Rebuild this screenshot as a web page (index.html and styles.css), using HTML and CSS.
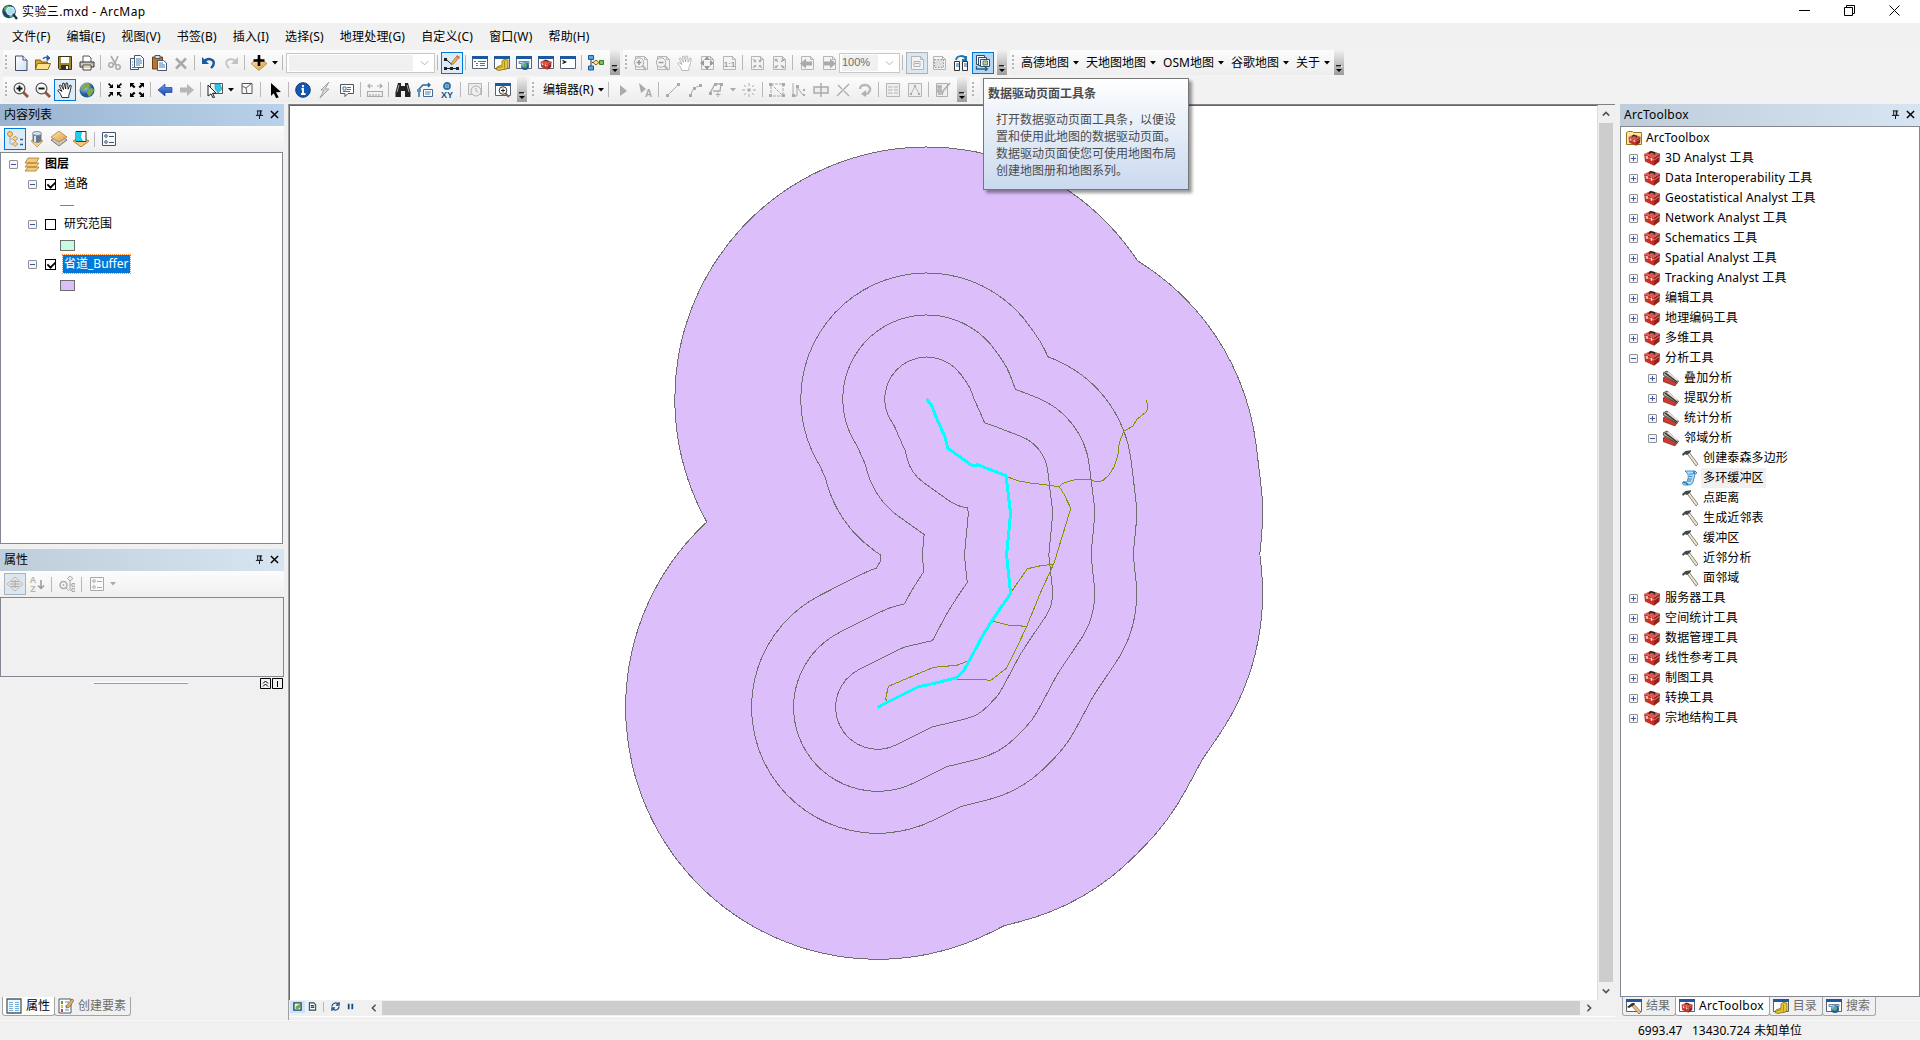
FILE: index.html
```html
<!DOCTYPE html>
<html lang="zh-CN">
<head>
<meta charset="utf-8">
<title>实验三.mxd - ArcMap</title>
<link rel="stylesheet" href="styles.css">
</head>
<body>
<svg class="sprite" aria-hidden="true">
<defs>
<linearGradient id="gGold" x2="1" y2="1"><stop stop-color="#ffe6ae"/><stop offset="1" stop-color="#d99c3c"/></linearGradient>
<linearGradient id="gBlue" x2="0" y2="1"><stop stop-color="#6b9be8"/><stop offset="1" stop-color="#1543a8"/></linearGradient>
<linearGradient id="gPage" x2="1" y2="1"><stop stop-color="#fff"/><stop offset="1" stop-color="#cfe0f2"/></linearGradient>
<radialGradient id="gGlobe" cx=".35" cy=".3"><stop stop-color="#bde0ff"/><stop offset="1" stop-color="#1c5aa0"/></radialGradient>
<symbol id="app" viewBox="0 0 16 16"><circle cx="7" cy="7.5" r="6.8" fill="#174c6b"/><path d="M2 4l4-3 2 3-2 3-3 1zM9 10l3 1-3 3-2-2z" fill="#63b45c"/><circle cx="8.5" cy="7" r="4" fill="#a7ddf5" stroke="#e8f4fa"/><path d="M11 10l4 5" stroke="#163a4d" stroke-width="2.4"/></symbol>
<symbol id="new" viewBox="0 0 16 16"><path d="M2.500 1h7.500l4 4v10.500H2.500z" fill="url(#gPage)" stroke="#3d4f66"/><path d="M10 1v4h4" fill="#fff" stroke="#3d4f66"/></symbol>
<symbol id="open" viewBox="0 0 16 16"><path d="M.5 14.500V5h5l1 2h6v7.500z" fill="#d9a534" stroke="#7a5b16"/><path d="M2.500 8.500H15.500L13 14.500H.5z" fill="#ffe18a" stroke="#8d6b20"/><path d="M8 4c1-2 3-2 5-1" fill="none" stroke="#2461a4" stroke-width="1.400"/><path d="M12 .5l3 2.500-3 2.500z" fill="#2461a4" stroke="#2461a4"/></symbol>
<symbol id="save" viewBox="0 0 16 16"><path d="M1.500 1.500h13v13h-12l-1-1z" fill="#a38a24" stroke="#3b3519"/><path d="M4 2h8v6H4z" fill="#fff"/><path d="M4 10h8v5H4z" fill="#303030"/><path d="M9 11h2v3H9z" fill="#fff"/></symbol>
<symbol id="print" viewBox="0 0 16 16"><path d="M4 7V1h6l2 2v4" fill="#fff" stroke="#555"/><path d="M1 7h14v5H1z" fill="#c9c9c9" stroke="#333"/><path d="M4 10h8v5H4z" fill="#fff" stroke="#444"/><path d="M5 12h6M12 8.500h2" stroke="#d2ad21"/></symbol>
<symbol id="cut" viewBox="0 0 16 16"><path d="M4 1l5 9M11 1L7 10" stroke="#aaa" stroke-width="1.600"/><circle cx="4" cy="10" r="2.200" fill="none" stroke="#aaa" stroke-width="1.500"/><circle cx="11" cy="12" r="2.200" fill="none" stroke="#aaa" stroke-width="1.500"/></symbol>
<symbol id="copy" viewBox="0 0 16 16"><path d="M1.500 3.500h8v11h-8z" fill="#fff" stroke="#42566d"/><path d="M5.500.5h6l3 3v9h-9z" fill="#fff" stroke="#42566d"/><path d="M7 4h5M7 6h6M7 8h6M7 10h4M3 7h1M3 10h1M3 12.500h5" stroke="#3f7db8"/></symbol>
<symbol id="paste" viewBox="0 0 16 16"><path d="M1.500 2h10v12h-10z" fill="#b9742d" stroke="#6d431c"/><path d="M4 .5h5v3H4z" fill="#ddd" stroke="#555"/><path d="M6.500 5.500h6l3 2.500v7.500h-9z" fill="#fff" stroke="#42566d"/><path d="M8 8h4M8 10h6M8 12h6" stroke="#3f7db8"/></symbol>
<symbol id="del" viewBox="0 0 16 16"><path d="M3 3.500l10 10M13 3.500l-10 10" stroke="#aaa" stroke-width="2.600"/></symbol>
<symbol id="undo" viewBox="0 0 16 16"><path d="M3.500 6C8 2 14 5 12.500 9.500Q12 11 10 13" fill="none" stroke="#1c5a9b" stroke-width="2.400"/><path d="M1 2v7h7z" fill="#1c5a9b"/></symbol>
<symbol id="redo" viewBox="0 0 16 16"><path d="M12.500 6C8 2 2 5 3.500 9.500Q4 11 6 13" fill="none" stroke="#c1c1c1" stroke-width="1.800"/><path d="M15 2v7H8z" fill="#c1c1c1"/></symbol>
<symbol id="add" viewBox="0 0 16 16"><path d="M0 8.500L8 3l8 5.500-8 7z" fill="url(#gGold)" stroke="#b58338" stroke-width=".8"/><path d="M8 0v11M2.500 5.500h11" stroke="#000" stroke-width="2.600"/></symbol>
<symbol id="edit" viewBox="0 0 16 16"><path d="M1.500 4L8 9.500M2 13.500h12" stroke="#222"/><path d="M0 3h3v3H0zM0 12h3v3H0zM6 12h3v3H6zM12 12h3v3h-3z" fill="#222"/><path d="M7 10l1-3 5-6 2 1.500-5 6z" fill="#f2b04e" stroke="#95662a" stroke-width=".7"/><path d="M13 0l3 2-1 2-3-2z" fill="#d46f5c"/></symbol>
<symbol id="win" viewBox="0 0 16 16"><path d="M.5 1.500h15v12H.5z" fill="#fff" stroke="#566375"/><path d="M0 1h16v3H0z" fill="#1d58a1"/></symbol>
<symbol id="toc" viewBox="0 0 16 16"><use href="#win"/><path d="M2 6.500h2M6 6.500h8M4 8.500h2M8 8.500h5M4 10.500h2M8 10.500h5" stroke="#3276bd"/></symbol>
<symbol id="catalog" viewBox="0 0 16 16"><use href="#win"/><path d="M8 6l2-1.500 4 .5v8l-3 1.500H9l-4 1-3-1 1-2.500 5-2z" fill="#e6c633" stroke="#7e690f" stroke-width=".8"/><path d="M10.500 6v7.500M3 13l6-1.500" stroke="#9d8418" stroke-width=".8" fill="none"/></symbol>
<symbol id="search" viewBox="0 0 16 16"><use href="#win"/><path d="M3 6.500h10v2H3z" fill="#dceaf6" stroke="#6b86a3"/><circle cx="9" cy="11" r="4" fill="url(#gGlobe)"/><path d="M7 10l2-2 2 2-1 3-2-1z" fill="#5fae52"/></symbol>
<symbol id="boxart" viewBox="0 0 16 16"><path d="M0 4L7 .8l9 2.700-6 4z" fill="#dd5449"/><path d="M0 4l10 3.500V15.800L1 11.500z" fill="#c93027"/><path d="M10 7.500l6-4-.5 8L10 15.800z" fill="#96201a"/><path d="M.3 6.500l9.700 3.500 5.700-3.800" fill="none" stroke="#f0a198" stroke-width=".7"/><path d="M5 3.700l1.500-1.900 4 1.100v1.600" fill="none" stroke="#222" stroke-width="1.400"/><path d="M3 6v3M7.500 7.700v3" stroke="#f2eded" stroke-width="1.300"/></symbol>
<symbol id="tbwin" viewBox="0 0 16 16"><use href="#win"/><use href="#boxart" x="2" y="4" width="12" height="11"/></symbol>
<symbol id="python" viewBox="0 0 16 16"><use href="#win"/><path d="M2.500 5.500l3 1.500-3 1.500" fill="none" stroke="#000" stroke-width="1.300"/></symbol>
<symbol id="model" viewBox="0 0 16 16"><path d="M3 3v10M4 7.500h9" stroke="#333"/><path d="M.5.500h5v4h-5zM.5 11h5v4h-5z" fill="#52a6e4" stroke="#165a9b"/><path d="M8 5l3 2.500L8 10 5 7.500z" fill="#ffe37a" stroke="#7b651d"/><path d="M11.500 5.500h4v4h-4z" fill="#79c34e" stroke="#367d24"/></symbol>
<symbol id="zin" viewBox="0 0 16 16"><path d="M10 10l5 5" stroke="#9b5146" stroke-width="2.800"/><circle cx="6.500" cy="6.500" r="5.400" fill="#f8f8f8" stroke="#555" stroke-width="1.200"/><path d="M3.500 6.500h6M6.500 3.500v6" stroke="#111" stroke-width="1.900"/></symbol>
<symbol id="zout" viewBox="0 0 16 16"><path d="M10 10l5 5" stroke="#9b5146" stroke-width="2.800"/><circle cx="6.500" cy="6.500" r="5.400" fill="#f8f8f8" stroke="#555" stroke-width="1.200"/><path d="M3.500 6.500h6" stroke="#111" stroke-width="1.900"/></symbol>
<symbol id="pan" viewBox="0 0 16 16"><path d="M5 15.500L3.500 12 .7 8.500 2 7.500l3 2L2.300 3.500 3.800 3l2.700 4.500L5.500 1.500 7 1l1.700 6L9 1l1.600.2.500 6L13 3l1.300.7L13 10l-1.200 3v2.500z" fill="#fff" stroke="currentColor" stroke-width=".8" stroke-linejoin="round"/></symbol>
<symbol id="globe" viewBox="0 0 16 16"><circle cx="8" cy="8" r="7.500" fill="url(#gGlobe)"/><path d="M4 3l4-2 3 1-1 3-3 1-3 3-2-2zM9 7l4-1 2 2-2 4-3 3-2-4z" fill="#84a943"/></symbol>
<symbol id="shrink" viewBox="0 0 16 16"><g fill="currentColor"><path d="M6 6H2l1.400-1.400L1 2.200 2.200 1l2.400 2.400L6 2zM10 6h4l-1.400-1.400L15 2.200 13.800 1l-2.400 2.400L10 2zM6 10H2l1.400 1.400L1 13.800 2.200 15l2.400-2.400L6 14zM10 10h4l-1.400 1.400 2.400 2.400-1.200 1.200-2.400-2.400L10 14z"/></g></symbol>
<symbol id="expand" viewBox="0 0 16 16"><g fill="currentColor"><path d="M1 1h4.500L4 2.500l2.500 2.300L5 6.300 2.500 4 1 5.500zM15 1h-4.500L12 2.500 9.500 4.800 11 6.300 13.500 4 15 5.500zM1 15h4.500L4 13.500l2.500-2.300L5 9.700 2.500 12 1 10.500zM15 15h-4.500l1.500-1.500-2.500-2.300L11 9.700l2.500 2.300 1.500-1.500z"/></g></symbol>
<symbol id="back" viewBox="0 0 16 16"><path d="M1 8l7-6v3.500h7v5H8V14z" fill="url(#gBlue)" stroke="#1b46a0" stroke-width=".7"/></symbol>
<symbol id="fwd" viewBox="0 0 16 16"><path d="M15 8L8 2v3.500H1v5h7V14z" fill="#b7b7b7"/></symbol>
<symbol id="select" viewBox="0 0 16 16"><path d="M3.500 1.500h12v10h-12z" fill="#eaf4fa" stroke="#555"/><path d="M8 2h5l2 5-4 4-3-4z" fill="#20cbea" stroke="#59808d" stroke-width=".6"/><path d="M1 3l8 8-3.500.3 2 4-1.500.6-2-4L1 14z" fill="#fff" stroke="#222"/></symbol>
<symbol id="clear" viewBox="0 0 16 16"><path d="M3 1.500h10v10H3z" fill="#f8f8f8" stroke="#555"/><path d="M3 4l4 2 1 5.500M7 6l5-4" stroke="#666" fill="none"/></symbol>
<symbol id="ptr" viewBox="0 0 16 16"><path d="M4 1l10 9-5 .3 2.700 5-2.500 1-2.500-5L4 14z" fill="currentColor"/></symbol>
<symbol id="info" viewBox="0 0 16 16"><circle cx="8" cy="8" r="7.300" fill="#1558af" stroke="#113a79"/><path d="M8 3v2.200M6.500 7H8v5M6 12h4.500" stroke="#fff" stroke-width="1.900" fill="none"/></symbol>
<symbol id="bolt" viewBox="0 0 16 16"><path d="M12 0L4 8h3l-4 8 9-9H8z" fill="#ddd" stroke="#999" stroke-width=".9"/></symbol>
<symbol id="popup" viewBox="0 0 16 16"><path d="M1.500 2.500h13v9H9l-3 3v-3H1.500z" fill="#fff" stroke="#555"/><path d="M4 5h3v3H4zM8 5.500h4M8 7.500h4M4 9.500h7" stroke="#397bb4" fill="none"/></symbol>
<symbol id="measure" viewBox="0 0 16 16"><path d="M1 4h5M10 4h5M3 2L1 4l2 2M13 2l2 2-2 2M.5 9.500h15v5H.5zM3 12v2M6 12v2M9 12v2M12 12v2" stroke="#aaa" stroke-width="1.200" fill="none"/></symbol>
<symbol id="binoc" viewBox="0 0 16 16"><path d="M3 1h3v3h4V1h3l2.500 9v5H10V9H6v6H.5v-5z" fill="#222"/><path d="M4 3L2 10M12 3l2 7" stroke="#aaa"/></symbol>
<symbol id="route" viewBox="0 0 16 16"><path d="M2 15V7l4-4h7M11 1l2 2-2 2" fill="none" stroke="#2465a2" stroke-width="1.400"/><path d="M6.500 7.500h9v7h-9z" fill="#fff" stroke="#49698b"/><path d="M8 10h6M8 12h5" stroke="#3d82bb"/><path d="M0 7h4v3H0z" fill="#5296cd"/></symbol>
<symbol id="xy" viewBox="0 0 16 16"><circle cx="8" cy="4" r="3" fill="#fff" stroke="#2871a8" stroke-width="1.800"/><path d="M8 2v4M6 4h4" stroke="#2871a8"/><text x="8" y="16" text-anchor="middle" font-size="9" font-weight="bold" fill="#174f83">XY</text></symbol>
<symbol id="clock" viewBox="0 0 16 16"><path d="M1.500 1.500h13v11h-13z" fill="#ececec" stroke="#b5b5b5"/><circle cx="9" cy="9" r="5" fill="#eee" stroke="#b0b0b0"/><path d="M9 6v3l2 1" fill="none" stroke="#b0b0b0"/></symbol>
<symbol id="viewer" viewBox="0 0 16 16"><use href="#win"/><path d="M10 11l4 4" stroke="#985d45" stroke-width="2"/><circle cx="8" cy="8.500" r="3.800" fill="#fff" stroke="#333"/><path d="M6 8.500h4M8 6.500v4" stroke="#222"/></symbol>
<symbol id="pg" viewBox="0 0 16 16"><path d="M2.500 1.500h9l3 3v10h-12z" fill="#f3f3f3" stroke="#b5b5b5"/><path d="M11.500 1.500v3h3" fill="none" stroke="#b5b5b5"/></symbol>
<symbol id="pzin" viewBox="0 0 16 16"><use href="#pg"/><path d="M9 10l4 5" stroke="#b8b8b8" stroke-width="2.200"/><circle cx="6" cy="7.500" r="4.700" fill="#f4f4f4" stroke="#aaa"/><path d="M3.500 7.500h5M6 5v5" stroke="#999" stroke-width="1.500"/></symbol>
<symbol id="pzout" viewBox="0 0 16 16"><use href="#pg"/><path d="M9 10l4 5" stroke="#b8b8b8" stroke-width="2.200"/><circle cx="6" cy="7.500" r="4.700" fill="#f4f4f4" stroke="#aaa"/><path d="M3.500 7.500h5" stroke="#999" stroke-width="1.500"/></symbol>
<symbol id="pfull" viewBox="0 0 16 16"><use href="#pg"/><path d="M8 1l3 4H5zM8 15l3-4H5zM1 8l4-3v6zM15 8l-4-3v6z" fill="#999"/></symbol>
<symbol id="pone" viewBox="0 0 16 16"><use href="#pg"/><text x="8.500" y="12" text-anchor="middle" font-size="8" font-weight="bold" fill="#999">1:1</text></symbol>
<symbol id="pshrink" viewBox="0 0 16 16"><use href="#pg"/><use href="#shrink" x="3" y="3" width="11" height="11"/></symbol>
<symbol id="pexpand" viewBox="0 0 16 16"><use href="#pg"/><use href="#expand" x="3" y="3" width="11" height="11"/></symbol>
<symbol id="pback" viewBox="0 0 16 16"><use href="#pg"/><path d="M1 8.500l6-5v3h6v4H7v3z" fill="#aaa"/></symbol>
<symbol id="pfwd" viewBox="0 0 16 16"><use href="#pg"/><path d="M15 8.500l-6-5v3H3v4h6v3z" fill="#aaa"/></symbol>
<symbol id="pdraft" viewBox="0 0 16 16"><use href="#pg"/><path d="M5 6.500h6v5H5z" fill="none" stroke="#b1b1b1"/><path d="M6 8.500h4" stroke="#aaa"/></symbol>
<symbol id="pfocus" viewBox="0 0 16 16"><use href="#pg"/><path d="M3.500 4.500h9v8h-9z" fill="#ddd" stroke="#999" stroke-dasharray="1.500 1.500"/></symbol>
<symbol id="change" viewBox="0 0 16 16"><path d="M3 5c1-5 8-5 10-1M13 1v4H9" fill="none" stroke="#2374aa" stroke-width="2"/><path d="M1.500 6.500h5v9h-5zM9.500 6.500h5v9h-5z" fill="#fff" stroke="#333"/><path d="M3 9h3M3 11h3M11 9h3M11 11h3" stroke="#2a6292"/></symbol>
<symbol id="ddp" viewBox="0 0 16 16"><path d="M1.500.5h8v9h-8z" fill="#fff" stroke="#344a62"/><path d="M3.500 2.500h8v8h-8z" fill="#eef5fb" stroke="#344a62"/><path d="M5.500 4.500h9v7h-9z" fill="#fff" stroke="#344a62"/><path d="M8 6h4.500v4H8z" fill="#b5d37f" stroke="#246382" stroke-width=".8"/><path d="M1.500 11v3h10M10 12l2.500 2-2.500 2" fill="none" stroke="#246382" stroke-width="1.300"/></symbol>
<symbol id="ptrs" viewBox="0 0 16 16"><path d="M5 3l7 6-7 5z" fill="#aaa"/></symbol>
<symbol id="ptra" viewBox="0 0 16 16"><path d="M2 1l7 6-5 4z" fill="#aaa"/><text x="11.500" y="15" text-anchor="middle" font-size="10" font-weight="bold" fill="#aaa">A</text></symbol>
<symbol id="line" viewBox="0 0 16 16"><path d="M3 13L13 3" stroke="#aaa"/><path d="M1 12h3v3H1zM12 1h3v3h-3z" fill="#aaa"/></symbol>
<symbol id="arc" viewBox="0 0 16 16"><path d="M4 13Q5 5 13 4" fill="none" stroke="#aaa"/><path d="M2 12h3v3H2zM6 5h3v3H6zM12 2h3v3h-3z" fill="#aaa"/></symbol>
<symbol id="trace" viewBox="0 0 16 16"><path d="M1 11L6 2h6l-1 7H4" fill="none" stroke="#aaa" stroke-width="1.300"/><path d="M0 10h3v3H0zM5 1h3v3H5zM11 1h3v3h-3z" fill="#aaa"/><path d="M9 10v5M6.500 12.500h5" stroke="#aaa"/></symbol>
<symbol id="point" viewBox="0 0 16 16"><path d="M8 1v3M8 12v3M1 8h3M12 8h3M3 3l2 2M11 11l2 2M13 3l-2 2M5 11l-2 2" stroke="#aaa"/><path d="M6.500 6.500h3v3h-3z" fill="#aaa"/></symbol>
<symbol id="verts" viewBox="0 0 16 16"><path d="M2 2L14 14H2zM2 2h12v12" fill="none" stroke="#aaa" stroke-dasharray="3 1"/><path d="M0 1h3v3H0zM0 12h3v3H0zM13 1h3v3h-3zM13 12h3v3h-3z" fill="#aaa"/></symbol>
<symbol id="resh" viewBox="0 0 16 16"><path d="M2 1v13h4V5l6 8" fill="none" stroke="#aaa"/><path d="M1 12h3v3H1zM5 3h3v3H5zM12 7h2v2h-2zM12 12h2v2h-2z" fill="#aaa"/></symbol>
<symbol id="cutp" viewBox="0 0 16 16"><path d="M1 5h14v6H1zM8 1v14" fill="#eee" stroke="#aaa" stroke-width="1.500"/></symbol>
<symbol id="split" viewBox="0 0 16 16"><path d="M2 14L14 2M3 3l4 4M9 9l5 5" stroke="#aaa" stroke-width="1.300"/></symbol>
<symbol id="rot" viewBox="0 0 16 16"><path d="M3 7C3 1 14 2 13 8q-1 4-5 4" fill="none" stroke="#b8b8b8" stroke-width="2.400"/><path d="M9 8v7l-5-3z" fill="#b0b0b0"/></symbol>
<symbol id="attr" viewBox="0 0 16 16"><path d="M1.500 1.500h13v13h-13zM3 5h4.500M3 8h4.500M3 11h4.500M9 5h4M9 8h4M9 11h4" fill="#eee" stroke="#b5b5b5"/></symbol>
<symbol id="sketch" viewBox="0 0 16 16"><path d="M1.500 1.500h13v13h-13zM4 12l4-8 4 8" fill="#eee" stroke="#b5b5b5"/><path d="M3 11h2v2H3zM7 3h2v2H7zM11 11h2v2h-2z" fill="#aaa"/></symbol>
<symbol id="creatg" viewBox="0 0 16 16"><path d="M1.500 1.500h11v13h-11z" fill="#eee" stroke="#b0b0b0"/><path d="M3 4h3v2H3zM3 8h3v2H3zM3 12h3M7 13l1-4 7-8" stroke="#aaa" fill="none" stroke-width="1.500"/></symbol>
<symbol id="order" viewBox="0 0 16 16"><path d="M3 4v9h5M3 8h5" stroke="#9baec0" fill="none"/><circle cx="3" cy="3" r="2.500" fill="#f6d28d" stroke="#c48c36"/><path d="M8 5l3 2.500L8 10 5.500 7.500zM8 10.500l3 2.500-3 2.500L5.500 13z" fill="#f6d28d" stroke="#c48c36" stroke-width=".8"/><path d="M13 8.500h3M13 13.500h3" stroke="#24649a" stroke-width="1.500"/></symbol>
<symbol id="source" viewBox="0 0 16 16"><path d="M2 10l6-3 6 3-6 6z" fill="#f5d18d" stroke="#bd873d" stroke-width=".7"/><path d="M3.500 2.500v8q4.500 2.500 9 0v-8z" fill="#68798e"/><ellipse cx="8" cy="2.500" rx="4.500" ry="2" fill="#d9e2eb" stroke="#77889a"/><path d="M6 5v6" stroke="#dce5ed" stroke-width="2"/></symbol>
<symbol id="visible" viewBox="0 0 16 16"><path d="M0 9l8-5 8 5-8 6z" fill="#c7c7c7" stroke="#777"/><path d="M0 6l8-6 8 6-8 5z" fill="url(#gGold)" stroke="#b58338" stroke-width=".8"/></symbol>
<symbol id="selc" viewBox="0 0 16 16"><path d="M0 10l8-4 8 4-8 6z" fill="#f3c775" stroke="#b58338"/><path d="M3 .5h10v10H3z" fill="#fff" stroke="#333"/><path d="M3 1h6l-1 5 2 4H3z" fill="#20cbea"/></symbol>
<symbol id="opts" viewBox="0 0 16 16"><path d="M1.500 1.500h13v13h-13z" fill="#f7f9fb" stroke="currentColor"/><circle cx="5" cy="5" r="1.300" fill="none" stroke="currentColor"/><circle cx="5" cy="11" r="1.300" fill="none" stroke="currentColor"/><path d="M8 5.500h5M8 11.500h5" stroke="currentColor"/></symbol>
<symbol id="stack" viewBox="0 0 16 16"><g fill="#f4ca7b" stroke="#a87932" stroke-width=".8"><path d="M1 15l3-4h11l-3 4zM1 11l3-4h11l-3 4zM1 7l3-5h11l-3 5z"/></g></symbol>
<symbol id="diamond" viewBox="0 0 16 16"><path d="M0 8l8-7 8 7-8 7z" fill="#e3e3e3" stroke="#bbb"/><path d="M4 5.500h8M3 8h10M4 10.500h8M8 4v8" stroke="#aaa"/></symbol>
<symbol id="az" viewBox="0 0 16 16"><text x="4" y="7" text-anchor="middle" font-size="9" font-weight="bold" fill="#b5b5b5">A</text><text x="4" y="16" text-anchor="middle" font-size="9" font-weight="bold" fill="#b5b5b5">Z</text><path d="M12 4v9M9 9.500l3 3 3-3" stroke="#999" stroke-width="1.500" fill="none"/></symbol>
<symbol id="find" viewBox="0 0 16 16"><circle cx="4.500" cy="9" r="3.500" fill="none" stroke="#aaa" stroke-width="1.500"/><circle cx="4.500" cy="9" r="1" fill="#aaa"/><path d="M7 12l3 3M11 0l3 2.500L11 5 8.500 2.500zM11 5v9h2M11 9h2M13 7.500h3v3h-3zM13 12.500h3v3h-3z" fill="#eee" stroke="#aaa"/></symbol>
<symbol id="tbroot" viewBox="0 0 16 16"><path d="M.5 14.500v-12l2-1h4l1 1h8v12z" fill="#ffe69a" stroke="#8f7a22"/><use href="#boxart" x="2" y="4" width="13" height="12"/></symbol>
<symbol id="kit" viewBox="0 0 16 16"><path d="M0 8l2-1 12 6-2 3L0 11.500z" fill="#d0392d" stroke="#6d1d17" stroke-width=".6"/><path d="M0 3l4-2 11.500 10-1.500 2.500L4 7 1 6z" fill="#b4b1a6" stroke="#34322e" stroke-width=".8"/><path d="M2 3l12 9" stroke="#333" stroke-width="1.500"/><path d="M5 2.500l9.500 8" stroke="#f1ebdf" stroke-width="1.300"/></symbol>
<symbol id="hammer" viewBox="0 0 16 16"><path d="M5 3.500l2.500-.8L16 14l-2 2z" fill="#eee5ce" stroke="#70685a" stroke-width=".8"/><path d="M0 4l3.500-3L9 .3v1.500L7.500 3 5 5 3 4.300 1 6z" fill="#44484b"/></symbol>
<symbol id="script" viewBox="0 0 16 16"><path d="M3 1h10l2 2-2 1-2 8q-1 3-4 3H2q-3-1-1-3h4q2-5 1-8z" fill="#b8dcf6" stroke="#3683bf" stroke-width=".9"/><path d="M7 4h4M7 6.500h3M6 9h4M6 11h3" stroke="#3687c9"/><path d="M1 12q4 1 5 3M12 1v3" stroke="#267bbf" stroke-width="1.600" fill="none"/></symbol>
<symbol id="results" viewBox="0 0 16 16"><use href="#win"/><path d="M5 7l3-1 7 8-2 2z" fill="#eabf8c" stroke="#7d5936" stroke-width=".7"/><path d="M1 9l5-4 3 0-1 2-5 3z" fill="#333"/></symbol>
<symbol id="table" viewBox="0 0 16 16"><path d="M1 1h14v14H1z" fill="#f2f8fc" stroke="#4d5963" stroke-width="1.300"/><path d="M3 4.500h4M9 4.500h4M3 6.500h4M9 6.500h4M3 8.500h4M9 8.500h4M3 10.500h4M9 10.500h4M3 12.500h4M9 12.500h4" stroke="#78aeda"/></symbol>
<symbol id="creat" viewBox="0 0 16 16"><path d="M1 1h12v14H1z" fill="#fff" stroke="#4d5963"/><path d="M3 3h2v3H3z" fill="#579a4c"/><path d="M3 7h2v3H3z" fill="#e5b63c"/><path d="M3 11h2v3H3z" fill="#bc503d"/><path d="M7 4h4M7 8h3M7 12h4" stroke="#458fc1"/><path d="M8 10l1-3 5-6 2 1.500-5 7z" fill="#e4b36b" stroke="#87512b" stroke-width=".7"/></symbol>
<symbol id="pin" viewBox="0 0 10 10"><path d="M2 1h6M3 1v5M6.500 1v5M5.800 1v5M1 6h8M5 6v4" stroke="#000" fill="none"/></symbol>
<symbol id="x" viewBox="0 0 10 10"><path d="M1 1l8 8M9 1L1 9" stroke="#000" stroke-width="1.600"/></symbol>
<symbol id="of" viewBox="0 0 8 8"><path d="M1.500 1.500h6" stroke="#fff"/><path d="M1 .8h5" stroke="#000" stroke-width="1.300"/><path d="M1 4h6L4 7z" fill="#000"/></symbol>
<symbol id="dd" viewBox="0 0 6 4"><path d="M0 0h6L3 3.500z" fill="currentColor"/></symbol>
<symbol id="chev" viewBox="0 0 10 6"><path d="M1 1l4 4 4-4" fill="none" stroke="currentColor" stroke-width="var(--w,1)"/></symbol>
</defs>
</svg>

<div class="app">
<header class="titlebar">
<svg class="i"><use href="#app"/></svg><span class="title">实验三.mxd - ArcMap</span>
<div class="wbtns">
<svg viewBox="0 0 11 11"><path d="M0 5.500h11" stroke="#000"/></svg>
<svg viewBox="0 0 11 11"><path d="M.5 2.500h8v8h-8zM2.500 2.500v-2h8v8h-2" fill="none" stroke="#000"/></svg>
<svg viewBox="0 0 11 11"><path d="M.5.500l10 10M10.500.500l-10 10" stroke="#000"/></svg>
</div>
</header>
<nav class="menu"><span>文件(F)</span><span>编辑(E)</span><span>视图(V)</span><span>书签(B)</span><span>插入(I)</span><span>选择(S)</span><span>地理处理(G)</span><span>自定义(C)</span><span>窗口(W)</span><span>帮助(H)</span></nav>

<div class="bars">
<div class="row">
<div class="tb"><i class="grip"></i>
<b><svg><use href="#new"/></svg></b><b><svg><use href="#open"/></svg></b><b><svg><use href="#save"/></svg></b><b><svg><use href="#print"/></svg></b><i class="sep"></i>
<b><svg><use href="#cut"/></svg></b><b><svg><use href="#copy"/></svg></b><b><svg><use href="#paste"/></svg></b><b><svg><use href="#del"/></svg></b><i class="sep"></i>
<b><svg><use href="#undo"/></svg></b><b><svg><use href="#redo"/></svg></b><i class="sep"></i>
<b><svg><use href="#add"/></svg></b><svg class="dd"><use href="#dd"/></svg><i class="sep"></i>
<div class="combo scale"><span></span><svg><use href="#chev"/></svg></div><i class="sep"></i>
<b class="on"><svg><use href="#edit"/></svg></b><i class="sep"></i>
<b><svg><use href="#toc"/></svg></b><b><svg><use href="#catalog"/></svg></b><b><svg><use href="#search"/></svg></b><b><svg><use href="#tbwin"/></svg></b><b><svg><use href="#python"/></svg></b><i class="sep"></i>
<b><svg><use href="#model"/></svg></b></div><div class="of"><svg><use href="#of"/></svg></div>
<div class="tb dis"><i class="grip"></i>
<b><svg><use href="#pzin"/></svg></b><b><svg><use href="#pzout"/></svg></b><b><svg><use href="#pan"/></svg></b><b><svg><use href="#pfull"/></svg></b><b><svg><use href="#pone"/></svg></b><i class="sep"></i>
<b><svg><use href="#pshrink"/></svg></b><b><svg><use href="#pexpand"/></svg></b><i class="sep"></i>
<b><svg><use href="#pback"/></svg></b><b><svg><use href="#pfwd"/></svg></b>
<div class="combo pct"><span>100%</span><svg><use href="#chev"/></svg></div><i class="sep"></i>
<b class="on off"><svg><use href="#pdraft"/></svg></b><b><svg><use href="#pfocus"/></svg></b><b><svg><use href="#change"/></svg></b><b class="on hot"><svg><use href="#ddp"/></svg></b></div><div class="of"><svg><use href="#of"/></svg></div>
<div class="tb maps"><i class="grip"></i><span>高德地图</span><svg class="dd"><use href="#dd"/></svg><span>天地图地图</span><svg class="dd"><use href="#dd"/></svg><span>OSM地图</span><svg class="dd"><use href="#dd"/></svg><span>谷歌地图</span><svg class="dd"><use href="#dd"/></svg><span>关于</span><svg class="dd"><use href="#dd"/></svg></div><div class="of"><svg><use href="#of"/></svg></div>
</div>
<div class="row">
<div class="tb"><i class="grip"></i>
<b><svg><use href="#zin"/></svg></b><b><svg><use href="#zout"/></svg></b><b class="on"><svg><use href="#pan"/></svg></b><b><svg><use href="#globe"/></svg></b><i class="sep"></i>
<b><svg><use href="#shrink"/></svg></b><b><svg><use href="#expand"/></svg></b><i class="sep"></i>
<b><svg><use href="#back"/></svg></b><b><svg><use href="#fwd"/></svg></b><i class="sep"></i>
<b><svg><use href="#select"/></svg></b><svg class="dd"><use href="#dd"/></svg><b><svg><use href="#clear"/></svg></b><i class="sep"></i>
<b><svg><use href="#ptr"/></svg></b><i class="sep"></i>
<b><svg><use href="#info"/></svg></b><b><svg><use href="#bolt"/></svg></b><b><svg><use href="#popup"/></svg></b><i class="sep"></i>
<b><svg><use href="#measure"/></svg></b><i class="sep"></i>
<b><svg><use href="#binoc"/></svg></b><b><svg><use href="#route"/></svg></b><b><svg><use href="#xy"/></svg></b><i class="sep"></i>
<b><svg><use href="#clock"/></svg></b><i class="sep"></i>
<b><svg><use href="#viewer"/></svg></b></div><div class="of"><svg><use href="#of"/></svg></div>
<div class="tb editor"><i class="grip"></i><span>编辑器(R)</span><svg class="dd"><use href="#dd"/></svg><i class="sep"></i>
<b><svg><use href="#ptrs"/></svg></b><b><svg><use href="#ptra"/></svg></b><i class="sep"></i>
<b><svg><use href="#line"/></svg></b><b><svg><use href="#arc"/></svg></b><b><svg><use href="#trace"/></svg></b><svg class="dd gray"><use href="#dd"/></svg><b><svg><use href="#point"/></svg></b><i class="sep"></i>
<b><svg><use href="#verts"/></svg></b><b><svg><use href="#resh"/></svg></b><b><svg><use href="#cutp"/></svg></b><b><svg><use href="#split"/></svg></b><b><svg><use href="#rot"/></svg></b><i class="sep"></i>
<b><svg><use href="#attr"/></svg></b><b><svg><use href="#sketch"/></svg></b><i class="sep"></i>
<b><svg><use href="#creatg"/></svg></b></div><div class="of"><svg><use href="#of"/></svg></div>
<div class="tb"><i class="grip"></i></div>
</div>
</div>

<main class="work">
<aside class="left">
<div class="head active"><span>内容列表</span><svg><use href="#pin"/></svg><svg><use href="#x"/></svg></div>
<div class="ptb"><b class="on"><svg><use href="#order"/></svg></b><b><svg><use href="#source"/></svg></b><b><svg><use href="#visible"/></svg></b><b><svg><use href="#selc"/></svg></b><i class="sep"></i><b class="navy"><svg><use href="#opts"/></svg></b></div>
<div class="toc">
<div class="tr"><i class="ex"></i><svg class="i"><use href="#stack"/></svg><strong>图层</strong></div>
<div class="tr l1"><i class="ex"></i><i class="ck on"></i><span>道路</span></div>
<div class="tr sym"><i class="ln"></i></div>
<div class="tr l1"><i class="ex"></i><i class="ck"></i><span>研究范围</span></div>
<div class="tr sym"><i class="sw mint"></i></div>
<div class="tr l1"><i class="ex"></i><i class="ck on"></i><span class="sel">省道_Buffer</span></div>
<div class="tr sym"><i class="sw lilac"></i></div>
</div>
<div class="head second"><span>属性</span><svg><use href="#pin"/></svg><svg><use href="#x"/></svg></div>
<div class="ptb two"><b class="on off"><svg><use href="#diamond"/></svg></b><b><svg><use href="#az"/></svg></b><i class="sep"></i><b><svg><use href="#find"/></svg></b><i class="sep"></i><b class="gray"><svg><use href="#opts"/></svg></b><svg class="dd gray"><use href="#dd"/></svg></div>
<div class="props"></div>
<div class="split"><i></i><svg viewBox="0 0 23 11"><path d="M.5.500h10v10H.5zM12.500.500h10v10h-10zM17.500 3v6M3 5.500L5.500 3 8 5.500M3 8.500L5.500 6 8 8.500" fill="none" stroke="#000"/></svg></div>
<div class="tabs ltabs"><div class="tab cur"><svg><use href="#table"/></svg>属性</div><div class="tab"><svg><use href="#creat"/></svg>创建要素</div></div>
</aside>

<section class="view">
<div class="maprow">
<svg class="map" viewBox="290 106 1307 894" shape-rendering="crispEdges">
<defs><path id="road" d="M926.800 399L932.300 406.700 934.800 414 944.900 436.700 947.900 448.300 972.700 466 977.700 464.700 1006 475.700 1010.600 513.300 1006.600 555 1010.600 593.300 992.500 620 984 633.300 969.700 660 964.300 670 956.700 677.700 938.600 682.300 918 687 877.600 707.300"/></defs>
<g class="buf">
<use href="#road" stroke="#6e6e6e" stroke-width="505"/><use href="#road" stroke="#dcbffa" stroke-width="503"/>
<use href="#road" stroke="#6e6e6e" stroke-width="253"/><use href="#road" stroke="#dcbffa" stroke-width="251"/>
<use href="#road" stroke="#6e6e6e" stroke-width="169"/><use href="#road" stroke="#dcbffa" stroke-width="167"/>
<use href="#road" stroke="#6e6e6e" stroke-width="85"/><use href="#road" stroke="#dcbffa" stroke-width="83"/>
</g>
<g class="minor">
<path d="M1007 476.700L1017.700 480.700 1030.400 483 1049.300 485.300 1059.400 486.700 1062.800 483.300 1071.200 480.700 1078.800 479H1088L1095.600 481.700 1102.700 480.700 1109 475 1114.500 466 1118.300 453.300 1119.200 442.700 1123.800 431.300 1133 426 1136.800 419.300 1146 412 1147.800 408.300 1146.500 400"/>
<path d="M1059.400 486.700L1064.400 495 1070.800 508.300 1056 556.700 1053.500 564.300 1040.900 591.700 1026.600 626.700 1015.600 650 1006.400 668.300 990.400 680.700 982.800 679.300H956.700"/>
<path d="M1011.400 591.700L1027.400 568.700 1040.900 565.700 1053.500 564.300M992.500 621L1009.300 625.300 1026.600 626.300M968.900 660.700L956.700 665.300 933.500 667.300 888.500 686.300 885.600 698.300 886.800 701.700"/>
</g>
<use href="#road" class="main"/>
</svg>
<div class="vs"><svg><use href="#chev"/></svg><i></i><svg><use href="#chev"/></svg></div>
</div>
<div class="hs"><b class="vw"><svg viewBox="0 0 10 10"><path d="M1 1h8v8H1z" fill="#eef6bd" stroke="#184a73" stroke-width="1.500"/><path d="M3 8V5l5-3v4L5 8z" fill="#74a552"/></svg></b>
<b><svg viewBox="0 0 10 10"><path d="M1.500 1h5l2 2v6h-7zM3 4h4M3 6h4" fill="#fff" stroke="#234a66" stroke-width="1.200"/></svg></b><i class="sep"></i>
<b class="rf"><svg viewBox="0 0 10 10"><path d="M1 5a4 4 0 0 1 7-2.500M9 0v3.500H5.500M9 5a4 4 0 0 1-7 2.500M1 10V6.500h3.500" fill="none" stroke="#194b84" stroke-width="1.400"/></svg></b>
<b class="ps"><svg viewBox="0 0 10 10"><path d="M3 2v6M7 2v6" stroke="#194b84" stroke-width="2"/></svg></b>
<svg class="ar lf"><use href="#chev"/></svg><i class="thumb"></i><svg class="ar rt"><use href="#chev"/></svg></div>
</section>

<aside class="right">
<div class="head second"><span class="w">ArcToolbox</span><svg><use href="#pin"/></svg><svg><use href="#x"/></svg></div>
<div class="tree">
<div class="n root"><svg><use href="#tbroot"/></svg><span>ArcToolbox</span></div>
<div class="n"><i class="ex p"></i><svg><use href="#boxart"/></svg><span>3D Analyst 工具</span></div>
<div class="n"><i class="ex p"></i><svg><use href="#boxart"/></svg><span>Data Interoperability 工具</span></div>
<div class="n"><i class="ex p"></i><svg><use href="#boxart"/></svg><span>Geostatistical Analyst 工具</span></div>
<div class="n"><i class="ex p"></i><svg><use href="#boxart"/></svg><span>Network Analyst 工具</span></div>
<div class="n"><i class="ex p"></i><svg><use href="#boxart"/></svg><span>Schematics 工具</span></div>
<div class="n"><i class="ex p"></i><svg><use href="#boxart"/></svg><span>Spatial Analyst 工具</span></div>
<div class="n"><i class="ex p"></i><svg><use href="#boxart"/></svg><span>Tracking Analyst 工具</span></div>
<div class="n"><i class="ex p"></i><svg><use href="#boxart"/></svg><span>编辑工具</span></div>
<div class="n"><i class="ex p"></i><svg><use href="#boxart"/></svg><span>地理编码工具</span></div>
<div class="n"><i class="ex p"></i><svg><use href="#boxart"/></svg><span>多维工具</span></div>
<div class="n"><i class="ex"></i><svg><use href="#boxart"/></svg><span>分析工具</span></div>
<div class="n l2"><i class="ex p"></i><svg><use href="#kit"/></svg><span>叠加分析</span></div>
<div class="n l2"><i class="ex p"></i><svg><use href="#kit"/></svg><span>提取分析</span></div>
<div class="n l2"><i class="ex p"></i><svg><use href="#kit"/></svg><span>统计分析</span></div>
<div class="n l2"><i class="ex"></i><svg><use href="#kit"/></svg><span>邻域分析</span></div>
<div class="n l3"><svg><use href="#hammer"/></svg><span>创建泰森多边形</span></div>
<div class="n l3"><svg><use href="#script"/></svg><span class="hl">多环缓冲区</span></div>
<div class="n l3"><svg><use href="#hammer"/></svg><span>点距离</span></div>
<div class="n l3"><svg><use href="#hammer"/></svg><span>生成近邻表</span></div>
<div class="n l3"><svg><use href="#hammer"/></svg><span>缓冲区</span></div>
<div class="n l3"><svg><use href="#hammer"/></svg><span>近邻分析</span></div>
<div class="n l3"><svg><use href="#hammer"/></svg><span>面邻域</span></div>
<div class="n"><i class="ex p"></i><svg><use href="#boxart"/></svg><span>服务器工具</span></div>
<div class="n"><i class="ex p"></i><svg><use href="#boxart"/></svg><span>空间统计工具</span></div>
<div class="n"><i class="ex p"></i><svg><use href="#boxart"/></svg><span>数据管理工具</span></div>
<div class="n"><i class="ex p"></i><svg><use href="#boxart"/></svg><span>线性参考工具</span></div>
<div class="n"><i class="ex p"></i><svg><use href="#boxart"/></svg><span>制图工具</span></div>
<div class="n"><i class="ex p"></i><svg><use href="#boxart"/></svg><span>转换工具</span></div>
<div class="n"><i class="ex p"></i><svg><use href="#boxart"/></svg><span>宗地结构工具</span></div>
</div>
<div class="tabs rtabs"><div class="tab"><svg><use href="#results"/></svg>结果</div><div class="tab cur w"><svg><use href="#tbwin"/></svg>ArcToolbox</div><div class="tab"><svg><use href="#catalog"/></svg>目录</div><div class="tab"><svg><use href="#search"/></svg>搜索</div></div>
</aside>
</main>
<footer class="status"><div class="coords"><span>6993.47</span><span>13430.724</span><span>未知单位</span></div></footer>

<div class="tip"><h4>数据驱动页面工具条</h4><p>打开数据驱动页面工具条，以便设<br>置和使用此地图的数据驱动页面。<br>数据驱动页面使您可使用地图布局<br>创建地图册和地图系列。</p></div>
</div>
</body>
</html>
```
FILE: styles.css
```css
* { box-sizing: border-box; }
body { margin: 0; font: 12px/16px "Noto Sans", "Noto Sans CJK SC", sans-serif; color: #000; background: #f0f0f0; }
svg text { font-family: "Liberation Sans", sans-serif; }
.sprite { position: absolute; width: 0; height: 0; }
.app { position: relative; width: 1920px; height: 1040px; display: flex; flex-direction: column; overflow: hidden; white-space: nowrap; }
i, b { display: block; flex: none; font-style: normal; font-weight: normal; }
svg { flex: none; display: block; }
.i { width: 16px; height: 16px; }

.titlebar { height: 23px; background: #fff; display: flex; align-items: center; padding-left: 2px; gap: 4px; }
.title { font-size: 12px; letter-spacing: .4px; padding-top: 1px; }
.wbtns { margin-left: auto; display: flex; gap: 34px; padding-right: 20px; padding-bottom: 3px; }
.wbtns svg { width: 11px; height: 11px; }
.menu { height: 27px; display: flex; align-items: center; gap: 16px; padding-left: 12px; background: #f1f1f1; letter-spacing: .2px; }

.bars { height: 54px; display: flex; flex-direction: column; gap: 2px; background: #f2f2f2; }
.row { height: 25px; display: flex; padding-left: 3px; }
.tb { display: flex; align-items: center; background: linear-gradient(#fcfcfc, #ededed); padding-right: 3px; }
.tb b, .ptb b { width: 22px; height: 22px; display: flex; align-items: center; justify-content: center; border: 1px solid transparent; }
.tb b svg, .ptb b svg { width: 16px; height: 16px; }
.tb b.on, .ptb b.on { border-color: #0078d7; background: #dcebf7; }
.tb b.hot { background: #b3d8f5; }
.tb b.off, .ptb b.off { border-color: #a9b4bd; background: #dbe6ef; }
.grip { width: 7px; height: 16px; background: repeating-linear-gradient(#b5b5b5 0 2px, transparent 2px 4px) 2px 0 / 2px 100% no-repeat; }
.sep { width: 6px; height: 15px; background: linear-gradient(#b8b8b8, #b8b8b8) 2px 0 / 1px 100% no-repeat; }
.dd { width: 6px; height: 4px; margin: 0 2px 0 2px; }
.gray { color: #aaa; }
.dis { color: #aaa; }
.of { width: 10px; margin-right: 3px; background: linear-gradient(#f0f0f0, #9c9c9c); display: flex; align-items: flex-end; justify-content: center; padding-bottom: 2px; }
.of svg { width: 8px; height: 8px; }
.combo { height: 20px; border: 1px solid #c8c8c8; background: #fff; display: flex; align-items: center; padding: 0 5px 0 2px; }
.combo span { flex: 1; height: 16px; background: #f0f0f0; color: #6d6d6d; font: 11px/15px "Liberation Sans", sans-serif; }
.combo svg { width: 9px; height: 6px; color: #aaa; margin-left: 7px; }
.scale { width: 149px; }
.pct { width: 61px; margin-left: -1px; }
.maps { padding-right: 4px; }
.maps span { margin: 0 1px 0 2px; }
.maps .grip { margin-right: 2px; }
.maps .dd { margin: 0 5px 0 3px; }
.maps .dd:last-child { margin-right: 0; }
.editor { padding-right: 3px; }
.editor span { width: 53px; margin: 0 0 0 6px; }

.work { flex: 1; min-height: 0; display: flex; }
.left { width: 284px; display: flex; flex-direction: column; }
.head { height: 22px; display: flex; align-items: center; padding: 0 5px 0 4px; gap: 6px; }
.head span { flex: 1; }
.head svg { width: 9px; height: 9px; margin-bottom: 1px; }
.active { background: linear-gradient(90deg, #99b4d1, #b9d1ea); }
.second { background: linear-gradient(90deg, #bfcddb, #d7e4f2); }
.ptb { height: 26px; display: flex; align-items: center; padding-left: 4px; background: linear-gradient(#fcfcfc, #efefef); }
.ptb .navy { color: #43566d; }
.toc { height: 392px; width: 283px; border: 1px solid #828790; background: #fff; padding-top: 1px; }
.tr { height: 20px; display: flex; align-items: center; padding-left: 8px; }
.tr .i { margin: 0 5px 0 6px; }
.l1 { padding-left: 27px; }
.sym { padding: 2px 0 0 59px; }
.ex { width: 9px; height: 9px; border: 1px solid #919191; border-radius: 1px; background: linear-gradient(#3c57a5, #3c57a5) center / 5px 1px no-repeat, #f6f6f6; }
.ex.p { background: linear-gradient(#3c57a5, #3c57a5) center / 5px 1px no-repeat, linear-gradient(#3c57a5, #3c57a5) center / 1px 5px no-repeat, #f6f6f6; }
.ck { width: 11px; height: 11px; border: 1px solid #000; margin: 0 6px 0 8px; background: #fff; }
.ck.on::after { content: ""; display: block; width: 7px; height: 4px; margin: 1px 0 0 1px; border: solid #000; border-width: 0 0 2px 2px; transform: rotate(-45deg) scale(.9); }
.tr span { padding: 0 1px; margin-left: 1px; }
.tr .sel { background: #0078d7; color: #fff; outline: 1px dotted #ff8728; height: 18px; line-height: 18px; margin-left: 1px; padding: 0 1px; }
.ln { width: 14px; height: 1px; background: #849112; }
.sw { width: 15px; height: 11px; border: 1px solid #6e6e6e; }
.mint { background: #c5fce3; }
.lilac { background: #dcbffa; }
.left .second { margin-top: 5px; }
.two { height: 26px; }
.two .sep { margin: 0 1px; }
.props { height: 80px; border: 1px solid #828790; }
.split { display: flex; padding: 1px 1px 0 94px; }
.split i { width: 94px; height: 2px; margin-top: 4px; border-top: 1px solid #fff; border-bottom: 1px solid #999; }
.split svg { width: 23px; height: 11px; margin-left: auto; }
.tabs { display: flex; height: 19px; }
.tab { display: flex; align-items: center; gap: 4px; padding: 0 4px 0 3px; border: 1px solid #a5a5a5; border-top: 0; border-radius: 0 0 3px 3px; color: #6d6d6d; margin-right: -1px; }
.tab svg { width: 16px; height: 16px; }
.tab.cur { background: #fff; color: #000; }
.ltabs { margin: auto 0 4px 2px; }

.view { width: 1327px; margin-left: 4px; margin-right: 5px; border-left: 1px solid #a0a0a0; border-top: 1px solid #828282; display: flex; flex-direction: column; }
.maprow { display: flex; height: 895px; }
.map { width: 1309px; height: 895px; background: #fff; border-left: 1px solid #666; border-top: 1px solid #666; border-right: 1px solid #ddd; }
.buf use { fill: none; stroke-linecap: round; stroke-linejoin: round; }
.minor { fill: none; stroke: #7f9500; stroke-width: 1; }
.main { fill: none; stroke: #00ffff; stroke-width: 3; stroke-linejoin: round; }
.vs { width: 16px; display: flex; flex-direction: column; align-items: center; --w: 2; color: #555; }
.vs svg { width: 8px; height: 6px; margin: 6px 0; }
.vs svg:first-child { transform: rotate(180deg); }
.vs i { flex: 1; width: 14px; background: #cdcdcd; }
.hs { height: 17px; display: flex; align-items: center; border-bottom: 1px solid #fff; --w: 2; color: #555; }
.hs b { width: 15px; height: 12px; display: flex; align-items: center; justify-content: center; margin-bottom: 3px; }
.hs b svg { width: 9px; height: 9px; }
.hs .vw { background: #cce4f7; margin-left: 1px; }
.hs .rf { margin-left: 1px; }
.hs .sep { margin-left: 1px; height: 10px; margin-bottom: 3px; }
.ar { width: 8px; height: 6px; }
.lf { transform: rotate(90deg); margin: 0 4px 0 12px; }
.rt { transform: rotate(-90deg); margin: 0 5px; }
.hs .thumb { height: 14px; flex: 1; background: #cdcdcd; }
.hs .rt { margin-right: 22px; }

.right { width: 300px; display: flex; flex-direction: column; }
.tree { height: 871px; width: 300px; border: 1px solid #828790; background: #fff; }
.w { letter-spacing: .25px; }
.n { height: 20px; display: flex; align-items: center; padding-left: 8px; }
.n svg { width: 16px; height: 16px; margin: 0 4px 0 6px; }
.n span { padding: 0 1px; letter-spacing: .14px; }
.root { padding: 1px 0 0 5px; height: 21px; }
.root svg { margin: 0 3px 0 0; }
.l2 { padding-left: 27px; }
.l3 { padding-left: 55px; }
.n .hl { background: #f0f0f0; line-height: 20px; padding: 0 2px; margin-left: -1px; }
.rtabs { margin-left: 2px; }
.rtabs .tab { padding-right: 5px; }
.status { height: 20px; border-top: 1px solid #f8f8f8; display: flex; align-items: center; }
.coords { margin-left: 1638px; display: flex; }
.coords span:nth-child(1) { width: 54px; }
.coords span:nth-child(2) { width: 62px; }

.tip { position: absolute; left: 983px; top: 78px; width: 206px; height: 112px; border: 1px solid #767676; background: linear-gradient(#fff, #c9d9ee); box-shadow: 3px 3px 3px rgba(0,0,0,.4); color: #4c4c4c; padding: 7px 4px 0; }
.tip h4 { margin: 0; font-size: 12px; line-height: 16px; }
.tip p { margin: 9px 0 0 8px; line-height: 17px; }
```
